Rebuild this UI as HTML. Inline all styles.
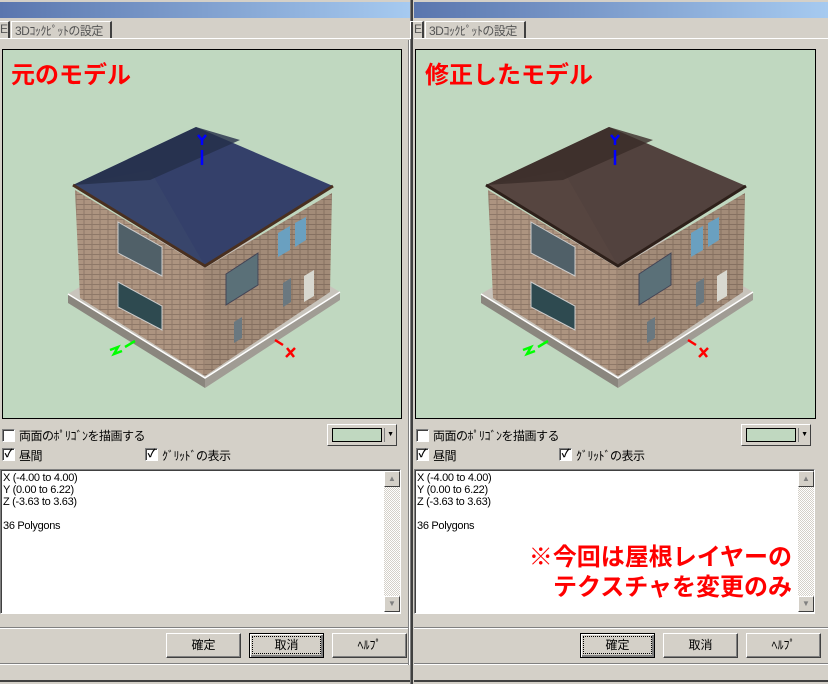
<!DOCTYPE html>
<html><head><meta charset="utf-8"><style>
*{margin:0;padding:0;box-sizing:border-box}
body{width:828px;height:684px;background:#d4d0c8;position:relative;overflow:hidden;font-family:"Liberation Sans","Noto Sans CJK JP",sans-serif;font-size:12px;color:#000}
.a{position:absolute}
.title{top:0;height:18px;background:linear-gradient(90deg,#5a76ae,#a6caf0);border-top:2px solid #d4d0c8}
.tab{top:21px;height:18px;border:1px solid #fff;border-right:2px solid #404040;border-bottom:none;font-size:12px;color:#555;padding:0 3px;white-space:nowrap;letter-spacing:-.5px}
.vp{top:49px;height:370px;background:#c0d8c0;border:1px solid #000}
.lbl{color:#f00;font-weight:bold;font-size:24px;white-space:nowrap;font-family:"Noto Sans CJK JP",sans-serif}
.cb{width:13px;height:13px;background:#fff;border:1px solid #808080;border-right-color:#fff;border-bottom-color:#fff;box-shadow:inset 1px 1px #404040;font-size:11px;line-height:11px;text-align:center;font-weight:bold}
.t{font-size:12px;white-space:nowrap;letter-spacing:-.5px}
.ta{top:469px;height:145px;background:#fff;border:1px solid #808080;border-right-color:#fff;border-bottom-color:#fff;box-shadow:inset 1px 1px #404040}
.ta pre{font-family:"Liberation Sans",sans-serif;font-size:11px;line-height:12px;padding:2px 2px;letter-spacing:-.3px}
.sb{width:16px;background:repeating-conic-gradient(#d4d0c8 0 25%,#fff 0 50%) 0 0/2px 2px}
.sbtn{width:16px;height:16px;background:#d4d0c8;border:1px solid #fff;border-right-color:#404040;border-bottom-color:#404040;font-size:8px;color:#808080;text-align:center;line-height:14px}
.btn{top:633px;width:75px;height:25px;border:1px solid #fff;border-right-color:#404040;border-bottom-color:#404040;box-shadow:inset -1px -1px #808080;text-align:center;line-height:22px;font-size:12px}
.def{border:1px solid #000;box-shadow:inset 1px 1px #fff,inset -2px -2px #808080}
.def span{outline:1px dotted #000;display:block;margin:3px;line-height:16px}
.hl{height:2px;border-top:1px solid #808080;border-bottom:1px solid #fff}
.vl{width:2px;border-left:1px solid #808080;border-right:1px solid #fff}
.combo{top:424px;width:70px;height:22px;border:1px solid #fff;border-right-color:#404040;border-bottom-color:#404040;background:#d4d0c8}
.combo i{position:absolute;left:4px;top:3px;width:50px;height:14px;background:#c0d8c0;border:1px solid #000}
.combo b{position:absolute;right:2px;top:3px;font-size:7px;border-left:1px solid #808080;padding-left:2px;line-height:14px}
</style></head><body>

<!-- LEFT PANEL -->
<div class="a title" style="left:0;width:410px"></div>
<div class="a tab" style="left:-4px;width:14px">E</div>
<div class="a tab" style="left:11px;width:101px">3Dｺｯｸﾋﾟｯﾄの設定</div>
<div class="a" style="left:0;top:38px;width:410px;height:1px;background:#fff"></div>
<div class="a vp" style="left:2px;width:400px"></div>
<div class="a lbl" style="left:11px;top:55px">元のモデル</div>
<div class="a cb" style="left:2px;top:429px"></div><div class="a t" style="left:19px;top:427px">両面のﾎﾟﾘｺﾞﾝを描画する</div>
<div class="a combo" style="left:327px"><i></i><b>▼</b></div>
<div class="a cb" style="left:2px;top:448px">✓</div><div class="a t" style="left:19px;top:447px">昼間</div>
<div class="a cb" style="left:145px;top:448px">✓</div><div class="a t" style="left:162px;top:447px">ｸﾞﾘｯﾄﾞの表示</div>
<div class="a ta" style="left:0;width:401px"><pre>X (-4.00 to 4.00)
Y (0.00 to 6.22)
Z (-3.63 to 3.63)

36 Polygons</pre></div>
<div class="a sb" style="left:384px;top:471px;height:141px"></div>
<div class="a sbtn" style="left:384px;top:471px">▲</div>
<div class="a sbtn" style="left:384px;top:596px">▼</div>
<div class="a hl" style="left:0;top:627px;width:410px"></div>
<div class="a btn" style="left:166px">確定</div>
<div class="a btn def" style="left:249px"><span>取消</span></div>
<div class="a btn" style="left:332px">ﾍﾙﾌﾟ</div>
<div class="a hl" style="left:0;top:663px;width:410px"></div>
<div class="a" style="left:0;top:680px;width:412px;height:2px;background:#404040"></div>
<div class="a vl" style="left:408px;top:40px;height:625px"></div>
<div class="a" style="left:410px;top:0;width:3px;height:684px;background:#404040;border-left:1px solid #808080"></div>

<!-- RIGHT PANEL -->
<div class="a title" style="left:414px;width:414px"></div>
<div class="a tab" style="left:410px;width:14px">E</div>
<div class="a tab" style="left:425px;width:101px">3Dｺｯｸﾋﾟｯﾄの設定</div>
<div class="a" style="left:414px;top:38px;width:414px;height:1px;background:#fff"></div>
<div class="a vp" style="left:415px;width:401px"></div>
<div class="a lbl" style="left:425px;top:55px">修正したモデル</div>
<div class="a cb" style="left:416px;top:429px"></div><div class="a t" style="left:433px;top:427px">両面のﾎﾟﾘｺﾞﾝを描画する</div>
<div class="a combo" style="left:741px"><i></i><b>▼</b></div>
<div class="a cb" style="left:416px;top:448px">✓</div><div class="a t" style="left:433px;top:447px">昼間</div>
<div class="a cb" style="left:559px;top:448px">✓</div><div class="a t" style="left:576px;top:447px">ｸﾞﾘｯﾄﾞの表示</div>
<div class="a ta" style="left:414px;width:401px"><pre>X (-4.00 to 4.00)
Y (0.00 to 6.22)
Z (-3.63 to 3.63)

36 Polygons</pre></div>
<div class="a sb" style="left:798px;top:471px;height:141px"></div>
<div class="a sbtn" style="left:798px;top:471px">▲</div>
<div class="a sbtn" style="left:798px;top:596px">▼</div>
<div class="a lbl" style="left:480px;top:540px;width:312px;text-align:right;line-height:30px">※今回は屋根レイヤーの<br>テクスチャを変更のみ</div>
<div class="a hl" style="left:414px;top:627px;width:414px"></div>
<div class="a btn def" style="left:580px"><span>確定</span></div>
<div class="a btn" style="left:663px">取消</div>
<div class="a btn" style="left:746px">ﾍﾙﾌﾟ</div>
<div class="a hl" style="left:414px;top:663px;width:414px"></div>
<div class="a" style="left:414px;top:680px;width:414px;height:2px;background:#404040"></div>

<svg class="a" style="left:0;top:0" width="828" height="420">
<defs>
<pattern id="br" width="8" height="5" patternUnits="userSpaceOnUse"><rect width="8" height="5" fill="#ad9480"/><path d="M0 4.5H8M4 0V4.5" stroke="#8e7868" stroke-width="1"/></pattern>
<g id="house">
<polygon points="68,294 205,378 340,292 205,212" fill="#c8c4bc"/>
<polygon points="68,294 205,378 205,388 68,303" fill="#8a867e"/>
<polygon points="205,378 340,292 340,300 205,388" fill="#a09c94"/>
<path d="M68,294 L205,378 L340,292" fill="none" stroke="#fff" stroke-width="1.5"/>
<polygon points="75,190 205,268 205,376 80,298" fill="url(#br)"/>
<polygon points="205,268 332,193 330,292 205,376" fill="url(#br)"/>
<polygon points="205,268 332,193 330,292 205,376" fill="#000" opacity=".06"/>
<polygon points="118,222 162,247 162,276 118,253" fill="#506068" stroke="#ccc"/>
<polygon points="118,282 162,306 162,330 118,307" fill="#2e4a50" stroke="#ccc"/>
<polygon points="226,274 258,253 258,285 226,305" fill="#5a7078" stroke="#445"/>
<polygon points="278,233 290,226 290,250 278,257" fill="#6aa0c0"/>
<polygon points="295,223 306,217 306,240 295,247" fill="#6aa0c0"/>
<polygon points="283,283 291,278 291,302 283,307" fill="#6a7880"/>
<polygon points="234,322 242,317 242,338 234,343" fill="#6a7880"/>
<polygon points="304,276 314,270 314,296 304,302" fill="#d8d8d0"/>
</g>
</defs>
<g>
<use href="#house"/>
<polygon points="73,185 196,127 333,186 205,266" fill="#34406a"/>
<polygon points="73,185 150,170 205,266" fill="#3c4a6c" opacity=".6"/>
<polygon points="196,127 240,140 150,180 73,185" fill="#242e48" opacity=".8"/>
<path d="M73,185 L205,266 L333,186" stroke="#4a3020" stroke-width="3" fill="none"/>
</g>
<g transform="translate(413,0)">
<use href="#house"/>
<polygon points="73,185 196,127 333,186 205,266" fill="#52423e"/>
<polygon points="73,185 150,170 205,266" fill="#5a4842" opacity=".6"/>
<polygon points="196,127 240,140 150,180 73,185" fill="#3a2c28" opacity=".8"/>
<path d="M73,185 L205,266 L333,186" stroke="#2e201a" stroke-width="3" fill="none"/>
</g>
<g id="ax" stroke-width="2.5" fill="none">
<path d="M202,150 V165 M198,135 L202,140 L206,135 M202,140 V145" stroke="#00f"/>
<path d="M110,350 L118,347 L114,354 L122,351 M125,347 L135,341" stroke="#0f0"/>
<path d="M275,340 L283,345 M287,348 L294,357 M295,348 L286,357" stroke="#f00"/>
</g>
<use href="#ax" transform="translate(413,0)"/>
</svg>
</body></html>
